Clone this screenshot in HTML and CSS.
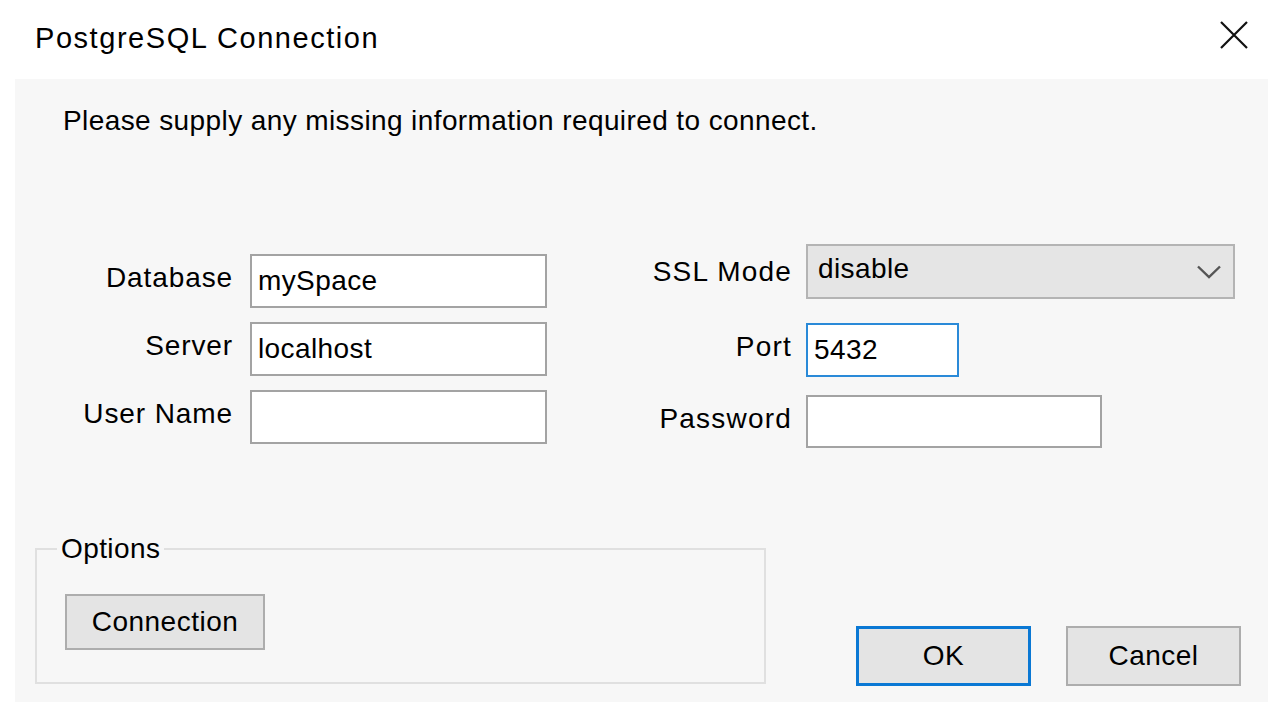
FILE: index.html
```html
<!DOCTYPE html>
<html>
<head>
<meta charset="utf-8">
<link rel="stylesheet" href="styles.css">
</head>
<body>
<div class="window">
  <div class="titlebar">
    <div class="title">PostgreSQL Connection</div>
    <div class="close">
      <svg width="28" height="28" viewBox="0 0 28 28"><path d="M1 1 L27 27 M27 1 L1 27" stroke="#111" stroke-width="2.2" fill="none"/></svg>
    </div>
  </div>
  <div class="content">
    <p class="intro">Please supply any missing information required to connect.</p>
    <div class="form">
      <div class="col left">
        <label class="lbl">Database</label>
        <div class="input">mySpace</div>
        <label class="lbl">Server</label>
        <div class="input">localhost</div>
        <label class="lbl">User Name</label>
        <div class="input"></div>
      </div>
      <div class="col right">
        <label class="lbl r1">SSL Mode</label>
        <div class="select r1"><span>disable</span>
          <svg width="24" height="14" viewBox="0 0 24 14"><path d="M1 1.5 L12 12 L23 1.5" stroke="#555" stroke-width="2.4" fill="none"/></svg>
        </div>
        <label class="lbl r2">Port</label>
        <div class="input port focused r2">5432</div>
        <label class="lbl r3">Password</label>
        <div class="input pass r3"></div>
      </div>
    </div>
    <div class="bottom">
      <fieldset class="group">
        <legend>Options</legend>
        <button class="btn conn">Connection</button>
      </fieldset>
      <div class="actions">
        <button class="btn ok">OK</button>
        <button class="btn cancel">Cancel</button>
      </div>
    </div>
  </div>
</div>
</body>
</html>
```
FILE: styles.css
```css
html, body {
  margin: 0;
  padding: 0;
  background: #ffffff;
}
body {
  font-family: "Liberation Sans", Arial, sans-serif;
  color: #000;
  width: 1268px;
  height: 702px;
  overflow: hidden;
}
.window {
  display: flex;
  flex-direction: column;
  height: 702px;
}
.titlebar {
  height: 79px;
  display: flex;
  align-items: center;
  justify-content: space-between;
  flex: none;
}
.title {
  font-size: 29px;
  padding-left: 35px;
  padding-top: 0px;
  padding-bottom: 2px;
  letter-spacing: 1.55px;
}
.close {
  width: 28px;
  height: 28px;
  margin-right: 20px;
  margin-bottom: 10px;
}
.close svg { display: block; }
.content {
  flex: 1;
  margin-left: 15px;
  background: #f7f7f7;
  display: flex;
  flex-direction: column;
  font-size: 28px;
  letter-spacing: 0.4px;
}
.intro {
  margin: 25px 0 0 48px;
  font-size: 28px;
  line-height: 34px;
}
.form {
  display: flex;
  margin-top: 106px;
  align-items: flex-start;
}
.col {
  display: grid;
  align-items: center;
}
.left {
  margin-top: 10px;
  margin-left: 48px;
  grid-template-columns: 170px 297px;
  grid-auto-rows: 54px;
  column-gap: 17px;
  row-gap: 14px;
}
.left .lbl { letter-spacing: 0.9px; }
.right {
  margin-left: 92px;
  grid-template-columns: 153px 429px;
  grid-template-rows: 55px 24px 54px 18px 53px;
  column-gap: 14px;
}
.right .lbl { letter-spacing: 1.2px; }
.r1 { grid-row: 1; }
.r2 { grid-row: 3; }
.r3 { grid-row: 5; }
.lbl {
  justify-self: end;
  padding-bottom: 6px;
  white-space: nowrap;
}
.right .lbl.r1 { padding-bottom: 0; }
.input {
  box-sizing: border-box;
  height: 100%;
  background: #fff;
  border: 2px solid #a3a3a3;
  padding: 0 8px 0 6px;
  display: flex;
  align-items: center;
  line-height: 1;
}
.port {
  width: 153px;
}
.focused {
  border-color: #2a8ad8;
}
.pass {
  width: 296px;
}
.select {
  box-sizing: border-box;
  height: 100%;
  background: #e5e5e5;
  border: 2px solid #b4b4b4;
  display: flex;
  align-items: center;
  justify-content: space-between;
  padding: 0 12px 6px 10px;
}
.select svg { display: block; margin-top: 6px; }
.bottom {
  margin-top: auto;
  display: flex;
  align-items: flex-end;
  margin-bottom: 16px;
}
.group {
  margin: 0 0 2px 20px;
  padding: 0 0 0 28px;
  width: 731px;
  height: 150px;
  box-sizing: border-box;
  border: 2px solid #e0e0e0;
}
.group legend {
  padding: 0 4px;
  margin-left: -8px;
  font-size: 28px;
  line-height: 30px;
}
.btn {
  font-family: "Liberation Sans", Arial, sans-serif;
  font-size: 28px;
  letter-spacing: 0.5px;
  color: #000;
  background: #e4e4e4;
  border: 2px solid #adadad;
  box-sizing: border-box;
  padding: 0;
}
.conn {
  width: 200px;
  height: 56px;
  margin-top: 30px;
}
.actions {
  display: flex;
  gap: 35px;
  margin-left: auto;
  margin-right: 27px;
}
.ok, .cancel {
  width: 175px;
  height: 60px;
}
.ok {
  border: 3px solid #0a78d4;
}
```
